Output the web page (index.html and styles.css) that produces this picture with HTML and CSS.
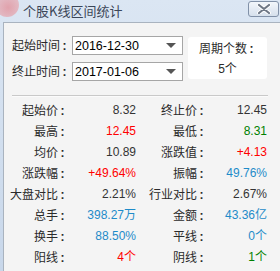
FILE: index.html
```html
<!DOCTYPE html>
<html lang="zh-CN">

<head>
    <meta charset="UTF-8">
    <link rel="stylesheet" href="styles.css">
</head>

<body>

    <div class="window">
        <div class="titlebar">
            <span class="logo"></span>
            <span class="title">个股K线区间统计</span>
            <span class="close">
                <svg width="16" height="10" viewBox="0 0 16 10">
                    <path d="M3 1 L13 9 M13 1 L3 9" stroke="#ffffff" stroke-width="4" stroke-linecap="round" />
                    <path d="M3 1 L13 9 M13 1 L3 9" stroke="#6f7886" stroke-width="2.2" stroke-linecap="round" />
                </svg>
            </span>
        </div>

        <div class="content">
            <div class="range">
                <div class="fields">
                    <div class="field">
                        <span class="field-label">起始时间<span class="colon">:</span></span>
                        <div class="select"><span>2016-12-30</span><span class="arrow"></span></div>
                    </div>
                    <div class="field">
                        <span class="field-label">终止时间<span class="colon">:</span></span>
                        <div class="select"><span>2017-01-06</span><span class="arrow"></span></div>
                    </div>
                </div>
                <div class="period">
                    <div>周期个数<span class="colon">:</span></div>
                    <div><span class="num">5</span>个</div>
                </div>
            </div>

            <div class="sep"></div>

            <div class="stats">
                <span class="lbl">起始价<span class="colon">:</span></span><span class="val">8.32</span>
                <span class="lbl">终止价<span class="colon">:</span></span><span class="val">12.45</span>

                <span class="lbl">最高<span class="colon">:</span></span><span class="val up">12.45</span>
                <span class="lbl">最低<span class="colon">:</span></span><span class="val down">8.31</span>

                <span class="lbl">均价<span class="colon">:</span></span><span class="val">10.89</span>
                <span class="lbl">涨跌值<span class="colon">:</span></span><span class="val up">+4.13</span>

                <span class="lbl">涨跌幅<span class="colon">:</span></span><span class="val up">+49.64%</span>
                <span class="lbl">振幅<span class="colon">:</span></span><span class="val blue">49.76%</span>

                <span class="lbl">大盘对比<span class="colon">:</span></span><span class="val">2.21%</span>
                <span class="lbl">行业对比<span class="colon">:</span></span><span class="val">2.67%</span>

                <span class="lbl">总手<span class="colon">:</span></span><span class="val blue">398.27万</span>
                <span class="lbl">金额<span class="colon">:</span></span><span class="val blue">43.36亿</span>

                <span class="lbl">换手<span class="colon">:</span></span><span class="val blue">88.50%</span>
                <span class="lbl">平线<span class="colon">:</span></span><span class="val blue">0个</span>

                <span class="lbl">阳线<span class="colon">:</span></span><span class="val up">4个</span>
                <span class="lbl">阴线<span class="colon">:</span></span><span class="val down">1个</span>
            </div>
        </div>
    </div>

</body>

</html>
```

FILE: styles.css
```css
body {
    margin: 0;
    font-family: "Liberation Sans", "Noto Sans CJK SC", sans-serif;
    font-size: 12px;
    color: #333;
    background-color: #f4f4f4;
}

.window {
    width: 280px;
    height: 271px;
    display: flex;
    flex-direction: column;
    background: linear-gradient(#dbe6f3, #c8d7ea);
    overflow: hidden;
}

.titlebar {
    position: relative;
    height: 22px;
    flex-shrink: 0;
    display: flex;
    align-items: center;
}

.logo {
    position: absolute;
    left: -5px;
    top: -7px;
    width: 24px;
    height: 24px;
    border-radius: 50%;
    background: radial-gradient(circle at 55% 60%, rgba(226, 150, 160, 0.85) 0%, rgba(230, 170, 178, 0.7) 60%, rgba(230, 190, 200, 0) 100%);
}

.title {
    margin-left: 23px;
    font-family: "Noto Sans CJK SC", sans-serif;
    font-size: 13px;
    color: #3b4658;
    margin-top: -2px;
}

.close {
    margin-left: auto;
    margin-right: 1px;
    margin-top: -4px;
    width: 29px;
    height: 14px;
    border: 1px solid #8191a8;
    border-radius: 3px;
    background: linear-gradient(#f2f6fb, #d6e0ec);
    display: flex;
    align-items: center;
    justify-content: center;
}

.content {
    flex: 1;
    margin-left: 3px;
    border-left: 1px solid #a9b3bf;
    border-top: 1px solid #a9b3bf;
    background-color: #f4f4f4;
    padding: 12px 11px 0 8px;
}

.range {
    display: flex;
    align-items: flex-start;
}

.fields {
    display: flex;
    flex-direction: column;
    gap: 5px;
}

.field {
    display: flex;
    align-items: center;
}

.field-label,
.lbl,
.period {
    font-family: "Noto Sans CJK SC", sans-serif;
    color: #2a2a2a;
    white-space: nowrap;
}

.field-label {
    width: 60px;
    font-size: 12px;
    line-height: 19px;
}

.colon {
    display: inline-block;
    width: 9px;
    text-align: center;
    font-family: "Liberation Sans", sans-serif;
    font-weight: bold;
}

.select {
    width: 107px;
    height: 17px;
    border: 1px solid #a6a6a6;
    background-color: #fff;
    display: flex;
    align-items: center;
    padding-left: 2px;
    font-size: 12.5px;
    color: #000;
}

.arrow {
    margin-left: auto;
    margin-right: 6px;
    width: 0;
    height: 0;
    border-left: 5px solid transparent;
    border-right: 5px solid transparent;
    border-top: 5px solid #555;
}

.period {
    margin-left: 5px;
    margin-top: 2px;
    width: 79px;
    height: 42px;
    background-color: #fff;
    border-radius: 3px;
    display: flex;
    flex-direction: column;
    align-items: center;
    justify-content: center;
    gap: 3px;
    font-size: 12px;
    line-height: 16px;
}

.num {
    font-family: "Liberation Sans", sans-serif;
}

.sep {
    margin-top: 13px;
    height: 1px;
    width: 256px;
    background-color: #c9c9c9;
    border-bottom: 1px solid #fbfbfb;
}

.stats {
    margin-top: 3px;
    margin-left: -1px;
    display: grid;
    grid-template-columns: 56px 69px 70px 61px;
    grid-auto-rows: 21px;
    align-items: center;
    line-height: 21px;
}

.lbl {
    justify-self: end;
    font-size: 12px;
}

.val {
    text-align: right;
    font-size: 12px;
    color: #333;
    white-space: nowrap;
}

.up {
    color: #ff0000;
}

.down {
    color: #008000;
}

.blue {
    color: #1e8bc9;
}
```
